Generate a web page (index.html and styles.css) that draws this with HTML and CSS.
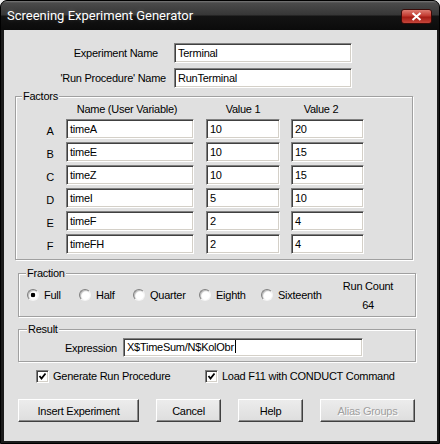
FILE: index.html
```html
<!DOCTYPE html>
<html lang="en">
<head>
    <meta charset="UTF-8">
    <title>Screening Experiment Generator</title>
    <link rel="stylesheet" href="styles.css">
</head>
<body>
<div class="window">
    <div class="titlebar">
        <span class="title">Screening Experiment Generator</span>
        <span class="closebtn">
            <svg width="11" height="9" viewBox="0 0 11 9"><path d="M1.5 1 L9.5 8 M9.5 1 L1.5 8" stroke="#fff" stroke-width="2"/></svg>
        </span>
    </div>

    <div class="client">
        <!-- experiment / procedure names -->
        <div class="names">
            <div class="namerow">
                <span class="lbl lbl-exp">Experiment Name</span>
                <div class="edit wide">Terminal</div>
            </div>
            <div class="namerow">
                <span class="lbl">'Run Procedure' Name</span>
                <div class="edit wide">RunTerminal</div>
            </div>
        </div>

        <!-- factors table -->
        <div class="group factors">
            <div class="legend">Factors</div>
            <div class="fgrid">
                <span></span>
                <span class="hdr hdr-name">Name (User Variable)</span>
                <span class="hdr hdr-v1">Value 1</span>
                <span class="hdr hdr-v2">Value 2</span>

                <span class="letter">A</span>
                <div class="edit ename">timeA</div>
                <div class="edit eval1">10</div>
                <div class="edit eval2">20</div>

                <span class="letter">B</span>
                <div class="edit ename">timeE</div>
                <div class="edit eval1">10</div>
                <div class="edit eval2">15</div>

                <span class="letter">C</span>
                <div class="edit ename">timeZ</div>
                <div class="edit eval1">10</div>
                <div class="edit eval2">15</div>

                <span class="letter">D</span>
                <div class="edit ename">timeI</div>
                <div class="edit eval1">5</div>
                <div class="edit eval2">10</div>

                <span class="letter">E</span>
                <div class="edit ename">timeF</div>
                <div class="edit eval1">2</div>
                <div class="edit eval2">4</div>

                <span class="letter">F</span>
                <div class="edit ename">timeFH</div>
                <div class="edit eval1">2</div>
                <div class="edit eval2">4</div>
            </div>
        </div>

        <!-- fraction choice -->
        <div class="group fraction">
            <div class="legend legend-fr">Fraction</div>
            <div class="fracrow">
                <label class="radio"><span class="rb on"></span>Full</label>
                <label class="radio"><span class="rb"></span>Half</label>
                <label class="radio"><span class="rb"></span>Quarter</label>
                <label class="radio"><span class="rb"></span>Eighth</label>
                <label class="radio"><span class="rb"></span>Sixteenth</label>
                <div class="runcount">
                    <div>Run Count</div>
                    <div>64</div>
                </div>
            </div>
        </div>

        <!-- result -->
        <div class="group result">
            <div class="legend legend-res">Result</div>
            <div class="exprrow">
                <span>Expression</span>
                <div class="edit expr">X$TimeSum/N$KolObr<span class="caret"></span></div>
            </div>
        </div>

        <div class="checks">
            <label class="check">
                <span class="cb"><svg width="9" height="9" viewBox="0 0 9 9"><path d="M1.5 4 L3.5 6.5 L7.5 1.5" fill="none" stroke="#000" stroke-width="1.8"/></svg></span>
                Generate Run Procedure
            </label>
            <label class="check">
                <span class="cb"><svg width="9" height="9" viewBox="0 0 9 9"><path d="M1.5 4 L3.5 6.5 L7.5 1.5" fill="none" stroke="#000" stroke-width="1.8"/></svg></span>
                Load F11 with CONDUCT Command
            </label>
        </div>

        <div class="buttons">
            <button class="btn btn-insert">Insert Experiment</button>
            <button class="btn btn-small">Cancel</button>
            <button class="btn btn-small">Help</button>
            <button class="btn btn-alias" disabled>Alias Groups</button>
        </div>
    </div>
</div>
</body>
</html>
```

FILE: styles.css
```css
body {
    margin: 0;
    background-color: #f0f0f0;
    font-family: "Liberation Sans", Arial, sans-serif;
    font-size: 11px;
    letter-spacing: -0.25px;
    color: #000;
}

/* window frame */
.window {
    width: 440px;
    height: 444px;
    box-sizing: border-box;
    border: 1px solid #000;
    border-radius: 7px 7px 0 0;
    background-color: #1b1b1b;
    display: flex;
    flex-direction: column;
    overflow: hidden;
}
.titlebar {
    height: 29px;
    flex: none;
    display: flex;
    justify-content: space-between;
    align-items: flex-start;
    padding: 0 7px 0 6px;
    background: linear-gradient(#7a7a7a 0, #4b4b4b 2px, #363636 14px, #131313 15px, #0b0b0b 100%);
}
.title {
    font-family: Roboto, sans-serif;
    font-size: 13px;
    letter-spacing: 0;
    line-height: 29px;
    color: #fff;
    text-shadow: 0 0 5px rgba(255, 255, 255, 0.2);
}
.closebtn {
    margin-top: 8px;
    width: 31px;
    height: 15px;
    box-sizing: border-box;
    border: 1px solid #3a0b08;
    border-radius: 3px;
    background: linear-gradient(#de7d72, #c23a30 45%, #a41d15 55%, #c6453a);
    display: flex;
    align-items: center;
    justify-content: center;
}

/* dialog body */
.client {
    flex: 1;
    margin: 0 2px 2px 3px;
    background-color: #e0e0e0;
}

.edit {
    height: 20px;
    box-sizing: border-box;
    background-color: #fff;
    border: 1px solid;
    border-color: #808080 #fff #fff #808080;
    box-shadow: inset 1px 1px 0 #404040, inset -1px -1px 0 #d4d0c8;
    padding: 0 3px;
    line-height: 18px;
    white-space: nowrap;
    overflow: hidden;
}

.names {
    padding-top: 13px;
    display: flex;
    flex-direction: column;
    gap: 5px;
}
.namerow {
    display: flex;
    align-items: center;
}
.lbl {
    width: 162px;
    margin-right: 8px;
    box-sizing: border-box;
    text-align: right;
}
.lbl-exp {
    padding-right: 8px;
}
.wide {
    width: 178px;
}

/* etched group boxes */
.group {
    width: 398px;
    box-sizing: border-box;
    border: 1px solid #a0a0a0;
    box-shadow: inset 1px 1px 0 #fff, 1px 1px 0 #fff;
}
.legend {
    width: fit-content;
    margin: -8px 0 0 6px;
    padding: 0 1px;
    line-height: 14px;
    background-color: #e0e0e0;
}
.legend-fr {
    margin-left: 7px;
}
.legend-res {
    margin-left: 8px;
}

.factors {
    margin: 8px 0 0 11px;
    padding-bottom: 5px;
}
.fgrid {
    margin: -1px 0 0 24px;
    display: grid;
    grid-template-columns: 26px 140px 85px 73px;
    grid-template-rows: 14px repeat(6, 20px);
    row-gap: 3px;
}
.hdr {
    line-height: 14px;
    text-align: center;
}
.hdr-name {
    width: 128px;
    padding-right: 6px;
    box-sizing: border-box;
}
.hdr-v1 {
    width: 74px;
}
.hdr-v2 {
    width: 73px;
    padding-right: 13px;
    box-sizing: border-box;
}
.letter {
    width: 20px;
    padding-top: 3px;
    line-height: 18px;
    text-align: center;
}
.ename {
    width: 128px;
}
.eval1 {
    width: 74px;
}
.eval2 {
    width: 73px;
}

.fraction {
    margin: 13px 0 0 14px;
    padding-bottom: 4px;
}
.fracrow {
    margin-top: -2px;
    height: 34px;
    display: grid;
    grid-template-columns: 52px 54px 66px 62px 1fr 60px;
    align-items: center;
    padding: 0 17px 0 8px;
}
.radio {
    display: flex;
    align-items: center;
    gap: 5px;
}
.rb {
    width: 12px;
    height: 12px;
    box-sizing: border-box;
    border-radius: 50%;
    border: 1px solid;
    border-color: #808080 #f4f4f4 #f4f4f4 #808080;
    background: radial-gradient(circle at 60% 60%, #fff 0, #fff 45%, #ececec 100%);
    box-shadow: inset 1px 1px 1px rgba(0, 0, 0, 0.25);
}
.rb.on {
    background: radial-gradient(circle at center, #000 0, #000 2px, #fff 2.6px, #fff 45%, #ececec 100%);
}
.runcount {
    display: flex;
    flex-direction: column;
    gap: 5px;
    line-height: 14px;
    text-align: center;
}

.result {
    margin: 12px 0 0 14px;
    padding-bottom: 4px;
}
.exprrow {
    margin-top: 2px;
    display: flex;
    align-items: center;
    gap: 6px;
    padding-left: 46px;
}
.expr {
    width: 240px;
    height: 19px;
    line-height: 17px;
}
.caret {
    display: inline-block;
    width: 1px;
    height: 13px;
    margin-left: 1px;
    vertical-align: -2px;
    background-color: #000;
}

.checks {
    margin-top: 7px;
    height: 14px;
    display: grid;
    grid-template-columns: 169px auto;
    align-items: center;
    padding-left: 32px;
}
.check {
    display: flex;
    align-items: center;
    gap: 4px;
}
.cb {
    width: 13px;
    height: 13px;
    box-sizing: border-box;
    background-color: #fff;
    border: 1px solid;
    border-color: #808080 #fff #fff #808080;
    box-shadow: inset 1px 1px 0 #404040, inset -1px -1px 0 #d4d0c8;
    display: flex;
    align-items: center;
    justify-content: center;
}

.buttons {
    margin-top: 16px;
    display: flex;
    gap: 17px;
    padding-left: 14px;
}
.btn {
    height: 23px;
    box-sizing: border-box;
    padding: 0;
    font: inherit;
    letter-spacing: inherit;
    color: #000;
    background: linear-gradient(#ececec, #dedede);
    border: 1px solid;
    border-color: #fff #404040 #404040 #fff;
    box-shadow: inset -1px -1px 0 #8a8a8a;
}
.btn-insert {
    width: 121px;
}
.btn-small {
    width: 65px;
}
.btn-alias {
    width: 95px;
    color: #a0a0a0;
    text-shadow: 1px 1px 0 #fff;
}
```
